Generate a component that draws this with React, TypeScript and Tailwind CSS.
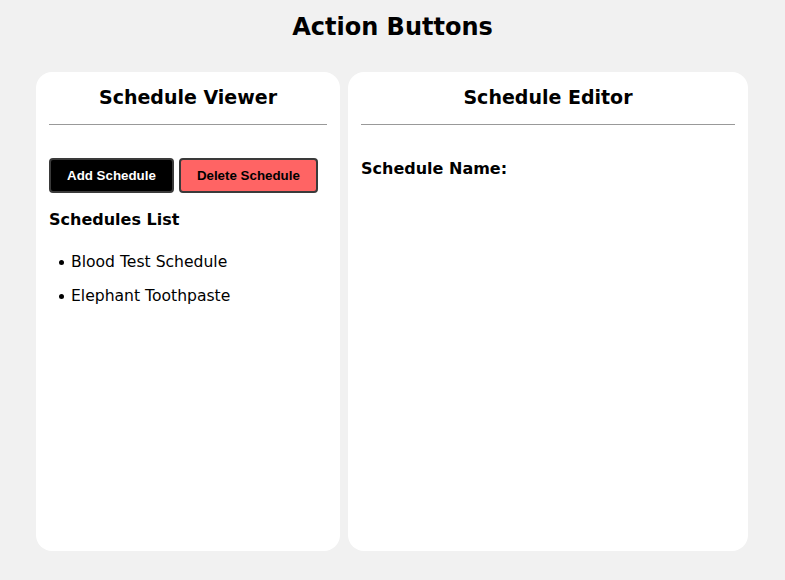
const schedules = ['Blood Test Schedule', 'Elephant Toothpaste'];

const ScheduleViewer = () => (
  <div className="w-[304px] rounded-2xl bg-white px-[13px] pt-[13px]">
    <h2 className="text-center text-[19px] font-bold leading-6">Schedule Viewer</h2>
    <hr className="mt-[15px] border-0 border-t border-[#999999]" />
    <div className="mt-[33px] flex gap-[5px]">
      <button
        type="button"
        className="h-[35px] rounded-[4px] border-2 border-[#3a3a3a] bg-black px-4 font-['Liberation_Sans',Arial,sans-serif] text-[13.33px] font-bold text-white"
      >
        Add Schedule
      </button>
      <button
        type="button"
        className="h-[35px] rounded-[4px] border-2 border-[#3a3a3a] bg-[#ff6464] px-4 font-['Liberation_Sans',Arial,sans-serif] text-[13.33px] font-bold text-black"
      >
        Delete Schedule
      </button>
    </div>
    <h3 className="mt-[17px] text-base font-bold leading-5">Schedules List</h3>
    <ul className="mt-[22px] space-y-[14px]">
      {schedules.map((name) => (
        <li key={name} className="flex items-center gap-[7px] pl-[10px] text-[15.6px] leading-5">
          <span className="h-[5px] w-[5px] shrink-0 rounded-full bg-black" />
          {name}
        </li>
      ))}
    </ul>
  </div>
);

const ScheduleEditor = () => (
  <div className="w-[400px] rounded-2xl bg-white px-[13px] pt-[13px]">
    <h2 className="text-center text-[19px] font-bold leading-6">Schedule Editor</h2>
    <hr className="mt-[15px] border-0 border-t border-[#999999]" />
    <p className="mt-[34px] text-base font-bold leading-5">Schedule Name:</p>
  </div>
);

export default function App() {
  return (
    <div className="min-h-[580px] bg-[#f1f1f1] pt-[13px] font-['DejaVu_Sans',Verdana,sans-serif] text-black">
      <h1 className="text-center text-2xl font-bold leading-7">Action Buttons</h1>
      <div className="mt-[31px] flex h-[479px] gap-2 pl-9">
        <ScheduleViewer />
        <ScheduleEditor />
      </div>
    </div>
  );
}
